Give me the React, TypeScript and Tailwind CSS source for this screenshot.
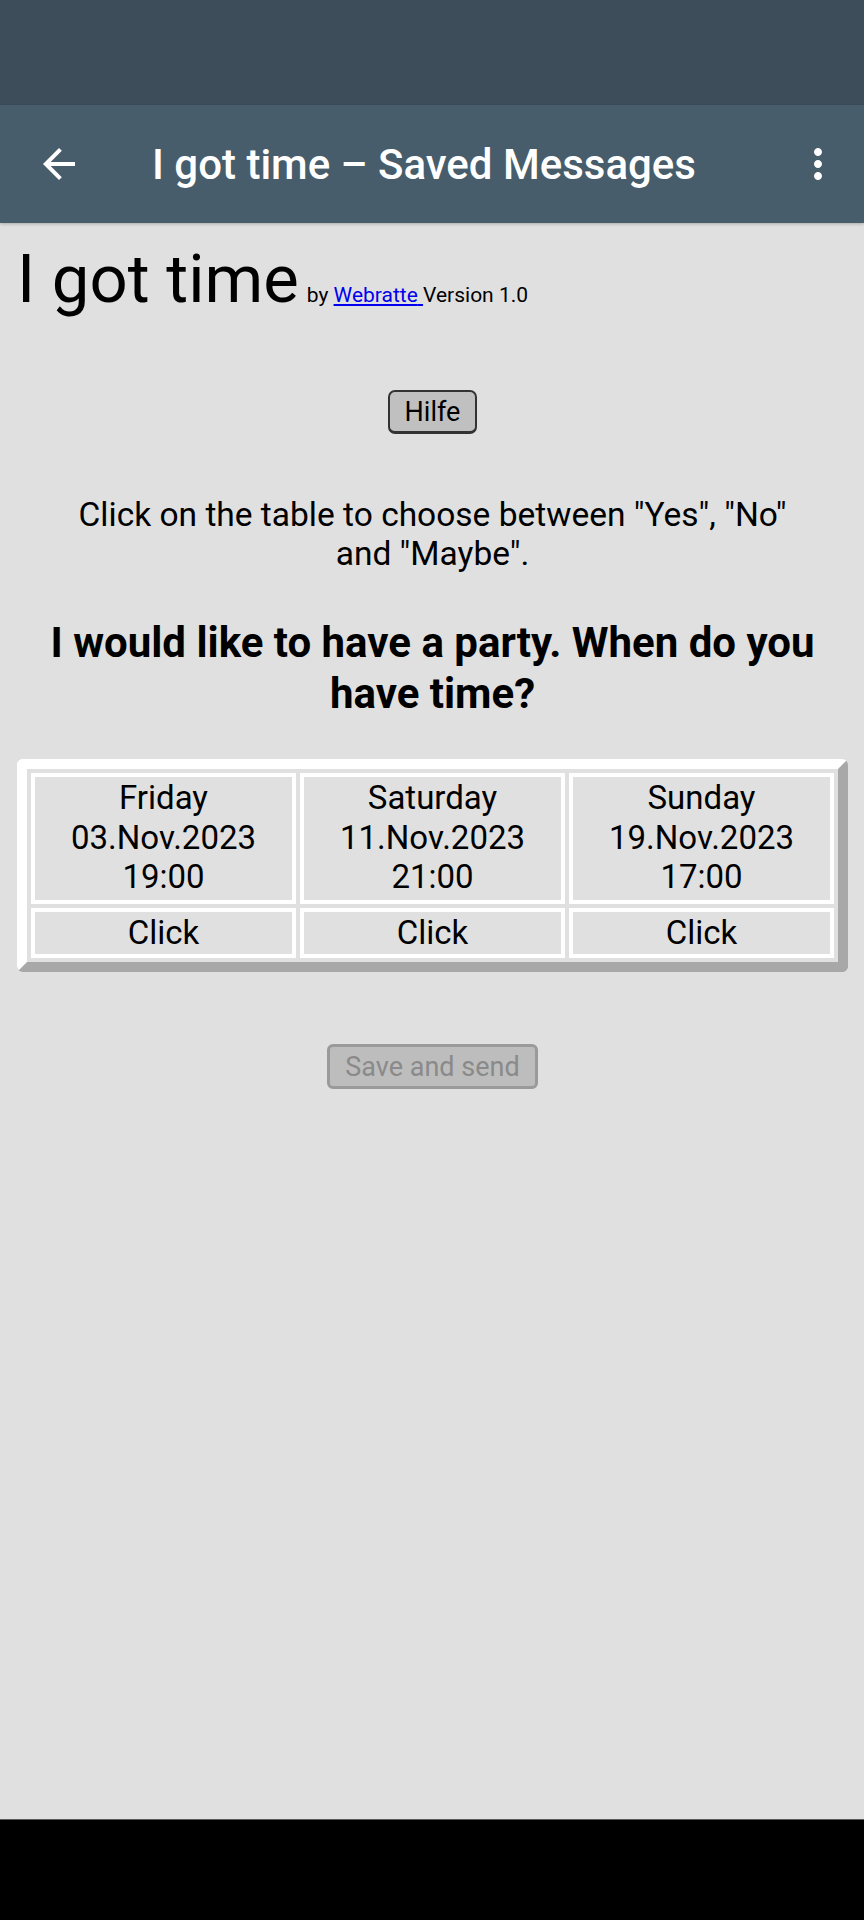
import React from "react";

export default function App() {
  const days = [
    { d: "Friday", date: "03.Nov.2023", t: "19:00" },
    { d: "Saturday", date: "11.Nov.2023", t: "21:00" },
    { d: "Sunday", date: "19.Nov.2023", t: "17:00" },
  ];
  return (
    <div className="flex h-[1920px] w-[864px] flex-col font-['Roboto',sans-serif] text-black">
      <div className="h-[105px] shrink-0 bg-[#3d4e5a]" />
      <div className="relative z-10 flex h-[118px] shrink-0 items-center bg-[#475d6b] shadow-[0_1px_3px_rgba(0,0,0,0.25)]">
        <svg className="ml-[35px] h-[48px] w-[48px] shrink-0" viewBox="0 0 24 24" fill="white">
          <path d="M20 11H7.83l5.59-5.59L12 4l-8 8 8 8 1.41-1.41L7.83 13H20v-2z" />
        </svg>
        <span className="ml-[69px] mt-[1px] flex-1 text-[42px] font-medium leading-[50px] text-white">
          I got time – Saved Messages
        </span>
        <svg className="mr-[22px] h-[48px] w-[48px] shrink-0" viewBox="0 0 24 24" fill="white">
          <path d="M12 8c1.1 0 2-.9 2-2s-.9-2-2-2-2 .9-2 2 .9 2 2 2zm0 2c-1.1 0-2 .9-2 2s.9 2 2 2 2-.9 2-2-.9-2-2-2zm0 6c-1.1 0-2 .9-2 2s.9 2 2 2 2-.9 2-2-.9-2-2-2z" />
        </svg>
      </div>
      <main className="flex flex-1 flex-col bg-[#e0e0e0] pl-[17px] pr-[16px]">
        <div className="mt-[17px] h-[78px] text-[67px] leading-[78px]">
          I got time
          <span className="ml-[8px] text-[21px]">
            by{" "}
            <a className="text-[#0000ee] underline" href="#">
              Webratte{" "}
            </a>
            Version 1.0
          </span>
        </div>
        <div className="mt-[72px] flex justify-center">
          <button className="h-[44px] rounded-[7px] border-[2.5px] border-b-[3px] border-[#333333] bg-[#c0c0c0] px-[15px] text-[27px] leading-[36px]">
            Hilfe
          </button>
        </div>
        <p className="mx-auto mt-[61px] w-[750px] text-center text-[33.5px] leading-[39px]">
          Click on the table to choose between "Yes", "No" and "Maybe".
        </p>
        <h2 className="mt-[45px] text-center text-[42px] font-bold leading-[50.5px]">
          I would like to have a party. When do you have time?
        </h2>
        <table className="mt-[40px] w-full table-fixed border-separate border-spacing-[4px] rounded-[6px] border-[10px] border-t-white border-l-white border-r-[#a8a8a8] border-b-[#a8a8a8] bg-[#e0e0e0]">
          <tbody>
            <tr>
              {days.map((x) => (
                <td key={x.d} className="border-4 border-white pt-[1px] pb-[3px] text-center text-[33px] leading-[39.5px]">
                  <div>{x.d}</div>
                  <div>{x.date}</div>
                  <div>{x.t}</div>
                </td>
              ))}
            </tr>
            <tr>
              {days.map((x) => (
                <td key={x.d} className="border-4 border-white pt-[1px] pb-[2px] text-center text-[33px] leading-[39.5px]">
                  Click
                </td>
              ))}
            </tr>
          </tbody>
        </table>
        <div className="mt-[72px] flex justify-center">
          <button className="h-[45px] rounded-[6px] border-[3px] border-[#9a9a9a] bg-[#bdbdbd] px-[15px] text-[27px] leading-[36px] text-[#8a8a8a]">
            Save and send
          </button>
        </div>
      </main>
      <div className="h-[101px] shrink-0 border-t border-[#5a5a5a] bg-black" />
    </div>
  );
}
